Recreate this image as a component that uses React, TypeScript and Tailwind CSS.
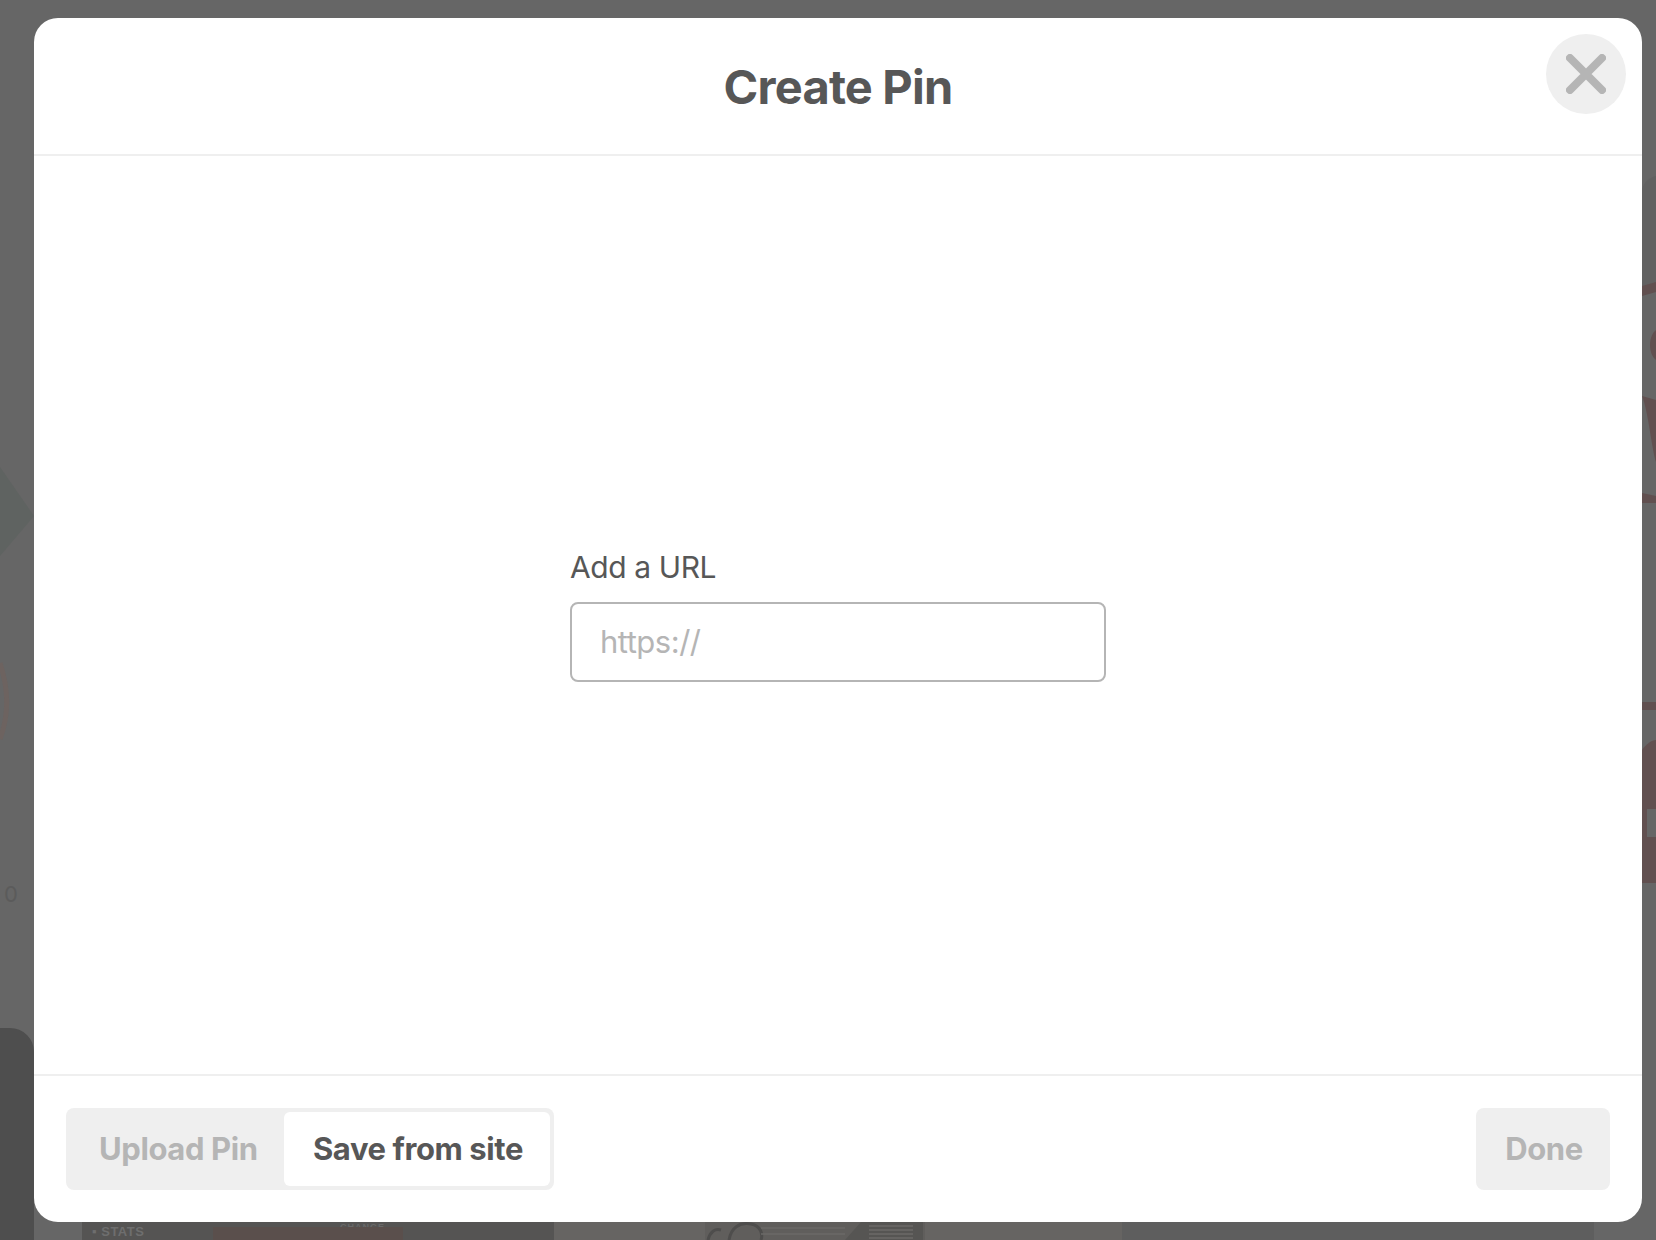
export default function App() {
  return (
    <div className="relative h-[1240px] w-[1656px] overflow-hidden bg-[#666666] font-['Inter','Liberation_Sans',sans-serif]">
      {/* dimmed page behind the dialog */}
      <div className="absolute bottom-0 left-0 h-[212px] w-[34px] rounded-tr-[24px] bg-[#4e4e4e]" />
      <div className="absolute left-[82px] top-[1222px] h-[18px] w-[472px] bg-[#555453]">
        <span className="absolute left-[10px] top-[3px] font-['Liberation_Sans',sans-serif] text-[13px] font-bold leading-[14px] tracking-[0.5px] text-[#6e6e6e]">▪ STATS</span>
        <span className="absolute left-[258px] top-0 font-['Liberation_Sans',sans-serif] text-[9px] font-bold leading-[10px] tracking-[1px] text-[#686868]">CHANGE</span>
        <div className="absolute left-[131px] top-[5px] h-[13px] w-[190px] bg-[#5a4f4c]" />
      </div>
      <div className="absolute left-[554px] top-[1222px] h-[18px] w-[568px] bg-[#666462]" />
      <svg viewBox="0 0 220 18" className="absolute left-[705px] top-[1222px] h-[18px] w-[220px]" fill="none">
        <path d="M0 0H220V18H0Z" fill="#605e5c" />
        <path d="M3 18C5 10 10 6 16 8M24 18C26 6 34 0 46 2 56 4 58 12 56 18" stroke="#4e4d4c" strokeWidth="3" />
        <path d="M56 6H140M56 12H140" stroke="#6b6967" strokeWidth="1.5" />
        <path d="M140 18 156 0h62v18Z" fill="#565553" />
        <path d="M164 4H208M164 8H208M164 12H208M164 16H208" stroke="#777572" strokeWidth="1" />
      </svg>
      <div className="absolute left-[1122px] top-[1222px] h-[18px] w-[472px] bg-[#5e5e5e]" />
      <svg viewBox="0 0 14 1240" className="absolute right-0 top-0 h-[1240px] w-[14px]" fill="#615050">
        <path d="M14 176C6 178 0 184 0 192V286L14 284Z" fill="#616161" />
        <path d="M0 286 14 282V292L0 296Z" />
        <path d="M14 330C6 336 6 354 14 360Z" />
        <path d="M0 396C6 410 10 450 14 462V400Z" />
        <path d="M0 493 14 496V503L0 503Z" />
        <path d="M0 702H14V710H0Z" />
        <path d="M0 750C4 744 10 740 14 740V883H0Z" />
        <path d="M5 809H14V837H5Z" fill="#666666" />
      </svg>
      <svg viewBox="0 0 34 1240" className="absolute left-0 top-0 h-[1240px] w-[34px]" fill="none">
        <path d="M0 467 34 516 0 556Z" fill="#5f6361" />
        <path d="M0 663C9 690 9 715 0 739" stroke="#6d6360" strokeWidth="5" />
      </svg>
      <span className="absolute left-[4px] top-[882px] text-[22px] leading-[24px] text-[#5b5b5b]">0</span>

      {/* dialog */}
      <div className="absolute left-[34px] top-[18px] flex h-[1204px] w-[1608px] flex-col rounded-[24px] bg-white text-[#575757]">
        <header className="relative flex h-[138px] shrink-0 items-center justify-center border-b-2 border-[#efefef]">
          <h1 className="mt-[2px] text-[47px] font-bold leading-[56px] tracking-[-0.8px]">Create Pin</h1>
          <button className="absolute right-[16px] top-[16px] flex h-[80px] w-[80px] items-center justify-center rounded-full bg-[#efefef]">
            <svg viewBox="0 0 40 40" className="h-[40px] w-[40px]" fill="none" stroke="#b5b5b5" strokeWidth="8" strokeLinecap="round">
              <path d="M4 4 36 36M36 4 4 36" />
            </svg>
          </button>
        </header>

        <main className="flex flex-1 flex-col items-center justify-center pb-[5px]">
          <div className="flex w-[536px] flex-col gap-[11px]">
            <label className="text-[30px] leading-[48px] tracking-[-0.4px]">Add a URL</label>
            <div className="flex h-[80px] items-center rounded-[8px] border-2 border-[#b5b5b5] px-[28px] text-[31px] tracking-[-0.5px] text-[#b5b5b5]">
              https://
            </div>
          </div>
        </main>

        <footer className="flex h-[148px] shrink-0 items-start justify-between border-t-2 border-[#efefef] px-[32px] pt-[32px]">
          <div className="flex h-[82px] w-[488px] items-center rounded-[8px] bg-[#efefef] p-[4px] text-[31px] font-bold tracking-[-0.4px]">
            <span className="w-[214px] pl-[29px] text-[#b5b5b5]">Upload Pin</span>
            <span className="flex h-[74px] flex-1 items-center justify-center rounded-[6px] bg-white pl-[2px]">Save from site</span>
          </div>
          <div className="flex h-[82px] w-[134px] items-center justify-center rounded-[8px] bg-[#efefef] pl-[2px] text-[31px] font-bold tracking-[-0.4px] text-[#b5b5b5]">
            Done
          </div>
        </footer>
      </div>
    </div>
  );
}
